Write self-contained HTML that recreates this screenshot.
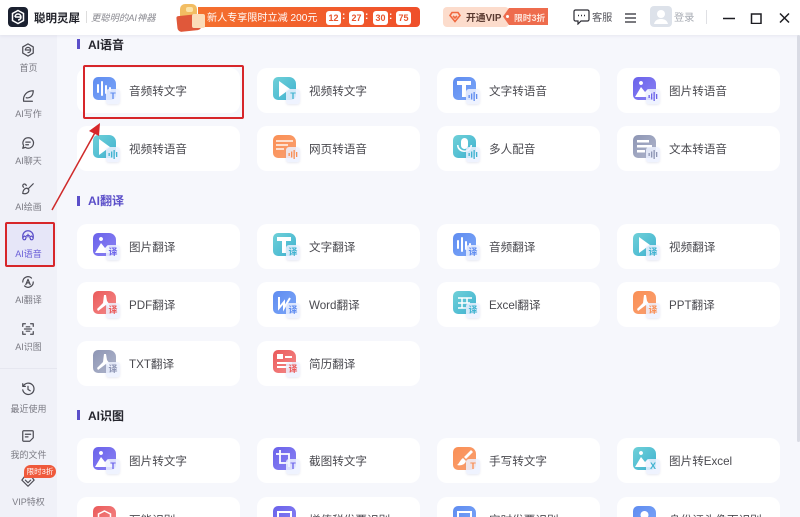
<!DOCTYPE html>
<html lang="zh"><head><meta charset="utf-8"><style>
*{box-sizing:border-box;margin:0;padding:0}
html,body{width:800px;height:517px;overflow:hidden}
body{position:relative;background:#f6f7fc;font-family:"Liberation Sans","Noto Sans CJK SC",sans-serif;color:#444}
#w{position:absolute;left:0;top:0;width:800px;height:517px;overflow:hidden;filter:blur(.35px)}
.a{position:absolute;white-space:nowrap}
#side{left:0;top:35px;width:57px;height:482px;background:#f0f1f8}
#top{left:0;top:0;width:800px;height:35px;background:#fff;box-shadow:0 1px 3px rgba(120,120,160,.12)}
.c{position:absolute;width:163px;height:45px;background:#fff;border-radius:10px}
.x1{left:77px}.x2{left:257px}.x3{left:437px}.x4{left:617px}
.c b{position:absolute;left:52px;top:0;line-height:47px;font-weight:400;font-size:11.6px;color:#4a4a50;white-space:nowrap}
.i{position:absolute;left:16px;top:9px;width:23px;height:23px;border-radius:5px 7px 5px 5px;overflow:hidden}
.i svg{position:absolute;left:0;top:0;width:23px;height:23px}
.t{position:absolute;left:29px;top:21px;width:14px;height:15px;border-radius:3px;background:rgba(236,241,255,.85);box-shadow:0 1px 2px rgba(120,130,180,.18);text-align:center;font-size:9px;line-height:15px;font-weight:700}
.t svg{position:absolute;left:2px;top:3px;width:10px;height:9px;fill:currentColor}
.blue{background:linear-gradient(135deg,#5f8cf0,#7ba6f8)}.cy{background:linear-gradient(135deg,#6fd0d8,#3fb2d0)}
.pu{background:linear-gradient(135deg,#6a62ea,#8a82f4)}.or{background:linear-gradient(135deg,#f98f55,#fba070)}
.gr{background:linear-gradient(135deg,#8d95b4,#b0b6cc)}.re{background:linear-gradient(135deg,#ea5a5a,#f58a8a)}
.h{position:absolute;left:88px;font-size:12px;font-weight:700;color:#26262e;line-height:14px}
.bar{position:absolute;left:77px;width:3px;height:10px;background:#5b4fc9}
.s{position:absolute;left:0;width:57px;text-align:center;font-size:9px;color:#7b7b84;line-height:11px}
.si{position:absolute;left:21px;width:14px;height:14px;fill:none;stroke:#4c4c54;stroke-width:1.4;stroke-linecap:round;stroke-linejoin:round}
.tm{position:absolute;top:11px;width:15px;height:14px;background:#fff;border-radius:3px;color:#e8562e;font-size:9px;font-weight:700;text-align:center;line-height:14px}
.co{position:absolute;top:10px;color:#fff;font-size:10px;font-weight:700;line-height:14px}
</style></head><body><div id="w">
<svg width="0" height="0" style="position:absolute"><defs>
<g id="wave" fill="#fff"><rect x="4" y="7" width="2" height="9" rx="1"/><rect x="8" y="4" width="2" height="15" rx="1"/><rect x="12" y="8" width="2" height="9" rx="1"/><rect x="16" y="10" width="2" height="4" rx="1"/></g>
<g id="mw"><rect x="0" y="3" width="1.300" height="3"/><rect x="2.500" y="1.500" width="1.300" height="6"/><rect x="5" y="0" width="1.300" height="9"/><rect x="7.500" y="2" width="1.300" height="5"/></g>
<path id="play" fill="#fff" d="M6 4l11 8-11 8z"/>
<path id="tt" fill="#fff" d="M4 4h14v4h-5v12H9V8H4z"/>
<path id="pic" fill="#fff" d="M2 20l6-10 4 5 3-3 6 8z M8 4a2 2 0 1 1-.01 0z"/>
<path id="pdf" fill="#fff" d="M11 4l2 0 1 6 6 8-2 1-5-5-8 6-1-2 6-6z"/>
</defs></svg>

<div class="a" id="side"></div>
<div class="a" style="left:5px;top:222px;width:50px;height:45px;background:#e6e6f8;border:2px solid #d7262a;border-radius:2px"></div>
<svg class="si" style="top:43px" viewBox="0 0 16 16"><path d="M8 1l6 3.500v7L8 15l-6-3.500v-7z"/><path d="M5 8a3 3 0 1 1 3 3M5 8h6"/></svg><div class="s" style="top:63px">首页</div>
<svg class="si" style="top:89px" viewBox="0 0 16 16"><path d="M3 14C2 7 7 2 14 2c0 6-4 9-8 8M4 14h9"/></svg><div class="s" style="top:109px">AI写作</div>
<svg class="si" style="top:136px" viewBox="0 0 16 16"><path d="M8 2a6 6 0 1 1-3 11l-3 1 1-3A6 6 0 0 1 8 2zM5.500 7h5M5.500 10h3"/></svg><div class="s" style="top:156px">AI聊天</div>
<svg class="si" style="top:182px" viewBox="0 0 16 16"><path d="M14 2L8 8M7 7c-3 0-5 3-5 6 3 1 7 0 7-4zM3 6a2 2 0 1 1 3-2"/></svg><div class="s" style="top:202px">AI绘画</div>
<svg class="si" style="top:229px;stroke:#5b4fc9" viewBox="0 0 16 16"><path d="M2 10V8a6 6 0 0 1 12 0v2M2 10a2 2 0 0 0 3 2l1-3-2-1zM14 10a2 2 0 0 1-3 2l-1-3 2-1zM8 6v3M6.500 7.500h3"/></svg><div class="s" style="top:249px;color:#6a5ed8">AI语音</div>
<svg class="si" style="top:275px" viewBox="0 0 16 16"><path d="M2 8a6 6 0 0 1 10-4.500M14 8a6 6 0 0 1-10 4.500M5.500 11L8 5l2.500 6M6.500 9h3"/></svg><div class="s" style="top:295px">AI翻译</div>
<svg class="si" style="top:322px" viewBox="0 0 16 16"><path d="M2 5V2h3M11 2h3v3M14 11v3h-3M5 14H2v-3M4 8h8M6 5.500h4M6 10.500h4"/></svg><div class="s" style="top:342px">AI识图</div>
<div class="a" style="left:0;top:368px;width:57px;height:1px;background:#e6e7f0"></div>
<svg class="si" style="top:382px" viewBox="0 0 16 16"><path d="M2.500 5A6.500 6.500 0 1 1 2 9M2 2v3h3M8 5v3.500l2.500 1.500"/></svg><div class="s" style="top:404px">最近使用</div>
<svg class="si" style="top:429px" viewBox="0 0 16 16"><path d="M3 2h10a1 1 0 0 1 1 1v7l-4 4H3a1 1 0 0 1-1-1V3a1 1 0 0 1 1-1zM5 6h6M5 9h3"/></svg><div class="s" style="top:450px">我的文件</div>
<svg class="si" style="top:474px" viewBox="0 0 16 16"><path d="M4 3h8l3 4-7 7-7-7zM5 7l3 3 3-3"/></svg><div class="s" style="top:497px">VIP特权</div>
<div class="a" style="left:24px;top:465px;width:32px;height:13px;background:#ef5a3c;border-radius:7px 7px 7px 1px;color:#fff;font-size:7.500px;line-height:13px;text-align:center">限时3折</div>

<div class="a" id="top"></div>
<div class="a" style="left:8px;top:7px;width:20px;height:20px;background:#1b2130;border-radius:4px"></div>
<svg class="a" style="left:10px;top:9px" width="16" height="16" viewBox="0 0 16 16" fill="none" stroke="#fff" stroke-width="1.500"><path d="M8 1.500l5.500 3v7L8 14.500l-5.500-3v-7zM5 8a3 3 0 1 1 3 3M5 8h6"/></svg>
<div class="a" style="left:34px;top:11px;font-size:11.500px;font-weight:700;color:#22232b;line-height:16px">聪明灵犀</div>
<div class="a" style="left:86px;top:11px;width:1px;height:12px;background:#ddd"></div>
<div class="a" style="left:91px;top:12px;font-size:9.300px;font-style:italic;color:#8b8b92;line-height:12px">更聪明的AI神器</div>
<div class="a" style="left:198px;top:7px;width:222px;height:20px;background:linear-gradient(90deg,#f4702e,#ef4f2a);border-radius:0 4px 4px 0"></div>
<div class="a" style="left:180px;top:4px;width:17px;height:13px;background:#f2bd62;border-radius:5px 5px 0 0"></div>
<div class="a" style="left:186px;top:7px;width:7px;height:5px;background:#fbe3a8;border-radius:2px"></div>
<div class="a" style="left:177px;top:15px;width:24px;height:16px;background:#e0583a;border-radius:2px 3px 4px 4px;transform:rotate(-6deg)"></div>
<div class="a" style="left:192px;top:14px;width:13px;height:14px;background:#fbdcb8;border-radius:2px"></div>
<div class="a" style="left:207px;top:12px;font-size:10.100px;color:#fff;line-height:14px">新人专享限时立减 200元</div>
<div class="tm" style="left:326px">12</div><div class="co" style="left:342px">:</div>
<div class="tm" style="left:349px">27</div><div class="co" style="left:365px">:</div>
<div class="tm" style="left:373px">30</div><div class="co" style="left:389px">:</div>
<div class="tm" style="left:396px">75</div>
<div class="a" style="left:443px;top:7px;width:66px;height:20px;background:#fcdccc;border-radius:4px"></div>
<svg class="a" style="left:449px;top:11px" width="12" height="12" viewBox="0 0 12 12" fill="none" stroke="#f0693f" stroke-width="1.600"><path d="M3 1.500h6l2 3L6 10.500 1 4.500zM4 5l2 2 2-2"/></svg>
<div class="a" style="left:466px;top:12px;font-size:9.800px;font-weight:700;color:#5a3a30;line-height:13px">开通VIP</div>
<div class="a" style="left:503px;top:8px;width:45px;height:17px;background:#ee6c4d;clip-path:polygon(6px 0,100% 0,100% 100%,6px 100%,0 50%)"></div>
<div class="a" style="left:506px;top:15px;width:3px;height:3px;background:#fff;border-radius:50%"></div>
<div class="a" style="left:514px;top:12px;font-size:8.800px;font-weight:700;color:#fde4da;line-height:12px">限时3折</div>
<svg class="a" style="left:573px;top:9px" width="17" height="16" viewBox="0 0 17 16" fill="none" stroke="#2b2b33" stroke-width="1.200"><path d="M2.500 1h12a1.500 1.500 0 0 1 1.500 1.500v8a1.500 1.500 0 0 1-1.500 1.500H8l-3 3v-3H2.500A1.500 1.500 0 0 1 1 10.500v-8A1.500 1.500 0 0 1 2.500 1z"/><path d="M5 6.500h1M8 6.500h1M11 6.500h1" stroke-width="1.500"/></svg>
<div class="a" style="left:592px;top:12px;font-size:10.200px;color:#55555c;line-height:14px">客服</div>
<svg class="a" style="left:625px;top:13px" width="11" height="10" viewBox="0 0 11 10" stroke="#2b2b33" stroke-width="1.200"><path d="M0 1h11M0 5h11M0 9h11"/></svg>
<div class="a" style="left:650px;top:6px;width:22px;height:21px;background:#dde2ea;border-radius:4px;overflow:hidden"><svg width="22" height="21" viewBox="0 0 22 21" fill="#fff"><circle cx="11" cy="8" r="4"/><path d="M4 18c1-4 4-5 7-5s6 1 7 5z"/></svg></div>
<div class="a" style="left:674px;top:12px;font-size:10.200px;color:#a8acb4;line-height:14px">登录</div>
<div class="a" style="left:706px;top:10px;width:1px;height:14px;background:#dfe0e4"></div>
<svg class="a" style="left:722px;top:12px" width="68" height="12" viewBox="0 0 68 12" fill="none" stroke="#1d1d22" stroke-width="1.500"><path d="M1 6.500h12"/><rect x="29.500" y="2" width="9.500" height="9.500"/><path d="M58 1.500l9 9M67 1.500l-9 9"/></svg>

<div class="bar" style="top:39px"></div><div class="h" style="top:38px">AI语音</div>
<div class="bar" style="top:196px"></div><div class="h" style="top:194px;color:#5b4fc9">AI翻译</div>
<div class="bar" style="top:410px"></div><div class="h" style="top:409px">AI识图</div>

<div class="c x1" style="top:68px"><div class="i blue"><svg viewBox="0 0 23 23"><use href="#wave"/></svg></div><span class="t" style="color:#5f8cf0">T</span><b>音频转文字</b></div>
<div class="c x2" style="top:68px"><div class="i cy"><svg viewBox="0 0 23 23"><use href="#play"/></svg></div><span class="t" style="color:#3fb2d0">T</span><b>视频转文字</b></div>
<div class="c x3" style="top:68px"><div class="i blue"><svg viewBox="0 0 23 23"><use href="#tt"/></svg></div><span class="t" style="color:#5f8cf0"><svg viewBox="0 0 9 9"><use href="#mw"/></svg></span><b>文字转语音</b></div>
<div class="c x4" style="top:68px"><div class="i pu"><svg viewBox="0 0 23 23"><use href="#pic"/></svg></div><span class="t" style="color:#6a62ea"><svg viewBox="0 0 9 9"><use href="#mw"/></svg></span><b>图片转语音</b></div>

<div class="c x1" style="top:126px"><div class="i cy"><svg viewBox="0 0 23 23"><use href="#play"/></svg></div><span class="t" style="color:#3fb2d0"><svg viewBox="0 0 9 9"><use href="#mw"/></svg></span><b>视频转语音</b></div>
<div class="c x2" style="top:126px"><div class="i or"><svg viewBox="0 0 23 23" fill="#fde0cf"><rect x="3" y="5" width="17" height="2"/><rect x="3" y="9" width="12" height="2"/><rect x="3" y="13" width="8" height="2"/></svg></div><span class="t" style="color:#f98f55"><svg viewBox="0 0 9 9"><use href="#mw"/></svg></span><b>网页转语音</b></div>
<div class="c x3" style="top:126px"><div class="i cy"><svg viewBox="0 0 23 23" fill="#fff"><rect x="8" y="3" width="7" height="11" rx="3.500"/><path d="M4 10c0 5 4 7 7.500 7S19 15 19 10h-1.500c0 3-3 5.500-6 5.500S5.500 13 5.500 10z"/></svg></div><span class="t" style="color:#3fb2d0"><svg viewBox="0 0 9 9"><use href="#mw"/></svg></span><b>多人配音</b></div>
<div class="c x4" style="top:126px"><div class="i gr"><svg viewBox="0 0 23 23" fill="#fff"><rect x="4" y="5" width="12" height="2.500"/><rect x="4" y="10" width="15" height="2.500"/><rect x="4" y="15" width="8" height="2.500"/></svg></div><span class="t" style="color:#8d95b4"><svg viewBox="0 0 9 9"><use href="#mw"/></svg></span><b>文本转语音</b></div>

<div class="c x1" style="top:224px"><div class="i pu"><svg viewBox="0 0 23 23"><use href="#pic"/></svg></div><span class="t" style="color:#6a62ea">译</span><b>图片翻译</b></div>
<div class="c x2" style="top:224px"><div class="i cy"><svg viewBox="0 0 23 23"><use href="#tt"/></svg></div><span class="t" style="color:#3fb2d0">译</span><b>文字翻译</b></div>
<div class="c x3" style="top:224px"><div class="i blue"><svg viewBox="0 0 23 23"><use href="#wave"/></svg></div><span class="t" style="color:#5f8cf0">译</span><b>音频翻译</b></div>
<div class="c x4" style="top:224px"><div class="i cy"><svg viewBox="0 0 23 23"><use href="#play"/></svg></div><span class="t" style="color:#3fb2d0">译</span><b>视频翻译</b></div>

<div class="c x1" style="top:282px"><div class="i re"><svg viewBox="0 0 23 23"><use href="#pdf"/></svg></div><span class="t" style="color:#ea5a5a">译</span><b>PDF翻译</b></div>
<div class="c x2" style="top:282px"><div class="i blue"><svg viewBox="0 0 23 23" fill="none" stroke="#fff" stroke-width="2"><path d="M6 6v11l5-6v6l6-10"/></svg></div><span class="t" style="color:#5f8cf0">译</span><b>Word翻译</b></div>
<div class="c x3" style="top:282px"><div class="i cy"><svg viewBox="0 0 23 23" fill="none" stroke="#fff" stroke-width="1.500"><path d="M5 7h14M5 12h12M5 17h8M9 7v10M14 7v5"/></svg></div><span class="t" style="color:#3fb2d0">译</span><b>Excel翻译</b></div>
<div class="c x4" style="top:282px"><div class="i or"><svg viewBox="0 0 23 23"><use href="#pdf"/></svg></div><span class="t" style="color:#f98f55">译</span><b>PPT翻译</b></div>

<div class="c x1" style="top:341px"><div class="i gr"><svg viewBox="0 0 23 23"><use href="#pdf"/></svg></div><span class="t" style="color:#8d95b4">译</span><b>TXT翻译</b></div>
<div class="c x2" style="top:341px"><div class="i re"><svg viewBox="0 0 23 23" fill="#fff"><rect x="4" y="4" width="6" height="5"/><rect x="12" y="6" width="7" height="2"/><rect x="4" y="12" width="15" height="2"/><rect x="4" y="16" width="12" height="2"/></svg></div><span class="t" style="color:#ea5a5a">译</span><b>简历翻译</b></div>

<div class="c x1" style="top:438px"><div class="i pu"><svg viewBox="0 0 23 23"><use href="#pic"/></svg></div><span class="t" style="color:#6a62ea">T</span><b>图片转文字</b></div>
<div class="c x2" style="top:438px"><div class="i pu"><svg viewBox="0 0 23 23" fill="none" stroke="#fff" stroke-width="1.800"><path d="M7 3v13h13M3 7h13v13"/></svg></div><span class="t" style="color:#6a62ea">T</span><b>截图转文字</b></div>
<div class="c x3" style="top:438px"><div class="i or"><svg viewBox="0 0 23 23" fill="#fff"><path d="M18 3l2 2-7 7-2-2zM10 11l3 3c-1 4-6 5-9 4 2-1 3-5 6-7z"/></svg></div><span class="t" style="color:#f98f55">T</span><b>手写转文字</b></div>
<div class="c x4" style="top:438px"><div class="i cy"><svg viewBox="0 0 23 23"><use href="#pic"/></svg></div><span class="t" style="color:#3fb2d0">X</span><b>图片转Excel</b></div>

<div class="c x1" style="top:497px"><div class="i re"><svg viewBox="0 0 23 23" fill="none" stroke="#fff" stroke-width="1.500"><path d="M11.500 5l6 3v6l-6 3-6-3V8z"/></svg></div><b>万能识别</b></div>
<div class="c x2" style="top:497px"><div class="i pu"><svg viewBox="0 0 23 23" fill="none" stroke="#fff" stroke-width="2"><rect x="5" y="6" width="13" height="11"/></svg></div><b>增值税发票识别</b></div>
<div class="c x3" style="top:497px"><div class="i blue"><svg viewBox="0 0 23 23" fill="none" stroke="#fff" stroke-width="2"><rect x="5" y="6" width="13" height="11"/></svg></div><b>实时发票识别</b></div>
<div class="c x4" style="top:497px"><div class="i blue"><svg viewBox="0 0 23 23" fill="#fff"><circle cx="11.500" cy="9" r="4"/><path d="M4 21c1-5 4-6 7.500-6s6.500 1 7.500 6z"/></svg></div><b>身份证头像面识别</b></div>

<div class="a" style="left:83px;top:65px;width:161px;height:54px;border:2px solid #d7262a;border-radius:2px"></div>
<svg class="a" style="left:50px;top:118px" width="55" height="100" viewBox="0 0 55 100" fill="none"><path d="M2 92L47 11" stroke="#cf2a2a" stroke-width="1.500"/><path d="M50 5l-1 13-10-5z" fill="#d7262a"/></svg>

<div class="a" style="left:797px;top:35px;width:3px;height:407px;background:#d9dbe4;border-radius:2px"></div>
</div></body></html>
